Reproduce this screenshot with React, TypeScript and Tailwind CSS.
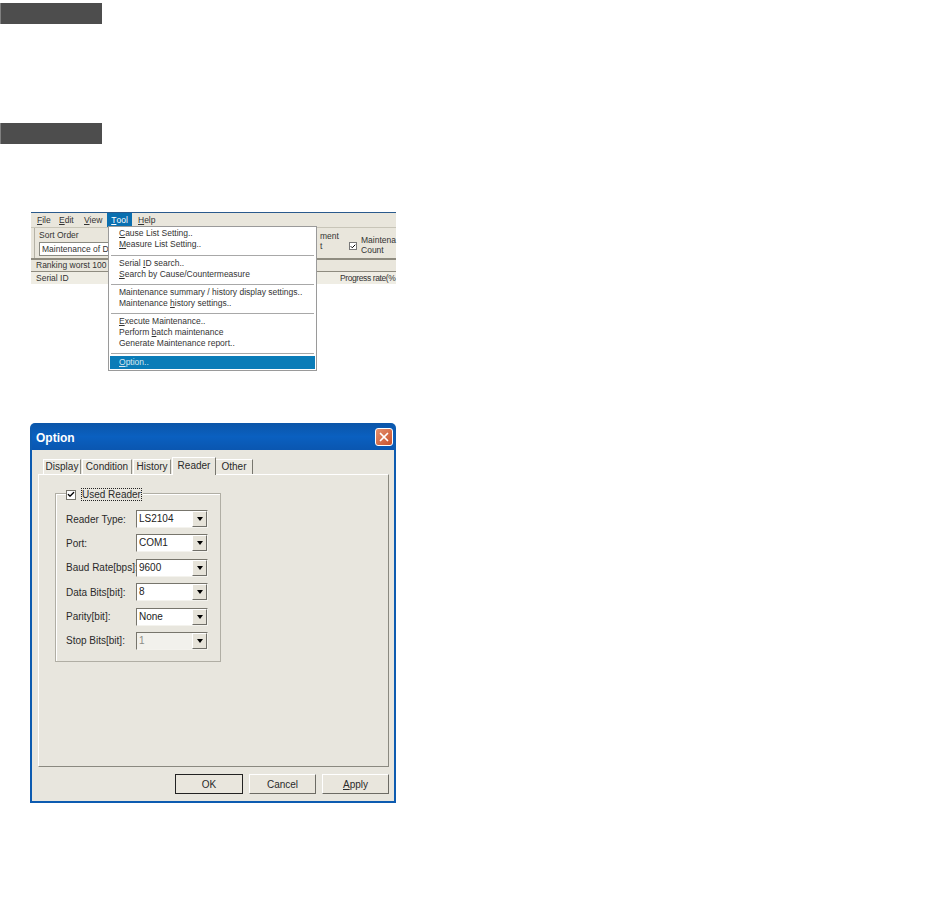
import type { ReactNode } from 'react';
import { Check, X } from 'lucide-react';

const menuGroups = [
  [
    { before: '', key: 'C', after: 'ause List Setting..' },
    { before: '', key: 'M', after: 'easure List Setting..' },
  ],
  [
    { before: 'Serial ', key: 'I', after: 'D search..' },
    { before: '', key: 'S', after: 'earch by Cause/Countermeasure' },
  ],
  [
    { before: 'Maintenance summary / history display settings..', key: '', after: '' },
    { before: 'Maintenance ', key: 'h', after: 'istory settings..' },
  ],
  [
    { before: '', key: 'E', after: 'xecute Maintenance..' },
    { before: 'Perform ', key: 'b', after: 'atch maintenance' },
    { before: 'Generate Maintenance report..', key: '', after: '' },
  ],
];

const tabs = [
  { label: 'Display', width: 'w-[38px]' },
  { label: 'Condition', width: 'w-[50px]' },
  { label: 'History', width: 'w-[38px]' },
];

const readerRows = [
  { label: 'Reader Type:', value: 'LS2104' },
  { label: 'Port:', value: 'COM1' },
  { label: 'Baud Rate[bps]:', value: '9600' },
  { label: 'Data Bits[bit]:', value: '8' },
  { label: 'Parity[bit]:', value: 'None' },
  { label: 'Stop Bits[bit]:', value: '1', disabled: true },
];

function SectionBar({ className }: { className: string }) {
  return <div className={`w-[102px] h-[21px] bg-[#4d4d4d] border-l border-[#808080] ${className}`}></div>;
}

function MenuScreenshot() {
  return (
    <div className="relative ml-[31px] w-[365px] h-[72px] mt-[68px] bg-[#e9e6dc] border-t border-[#2a5a8c] text-[8.5px] text-[#333]">
      {/* Menu bar */}
      <div className="flex h-[14px] items-center">
        <span className="ml-[6px] w-[22px]"><u>F</u>ile</span>
        <span className="w-[25px]"><u>E</u>dit</span>
        <span className="w-[23px]"><u>V</u>iew</span>
        <span className="w-[25px] h-full bg-[#0a6fb0] text-white flex items-center justify-center"><u>T</u>ool</span>
        <span className="ml-[6px]"><u>H</u>elp</span>
      </div>

      {/* Toolbar */}
      <div className="flex h-[31px] border-t border-[#c8c5b8] bg-[#e9e6dc]">
        <div className="w-[77px] ml-[3px] pl-[4px] pt-[1px] border-l border-[#b5b2a6]">
          <div className="h-[13px] leading-[13px]">Sort Order</div>
          <div className="w-[90px] h-[14px] leading-[13px] bg-white border border-[#8a8a82] pl-[2px] whitespace-nowrap">Maintenance of De</div>
        </div>
        <div className="ml-[209px] w-[33px] pt-[3px] leading-[10px] whitespace-nowrap">
          <div>ment</div>
          <div>t</div>
        </div>
        <div className="ml-[3px] w-[8px] h-[8px] mt-[14px] bg-white border border-[#777] flex items-center justify-center">
          <Check size={7} strokeWidth={4} className="text-black" />
        </div>
        <div className="ml-[4px] pt-[7px] leading-[10px] whitespace-nowrap">
          <div>Maintena</div>
          <div>Count</div>
        </div>
      </div>

      {/* Ranking and header rows */}
      <div className="h-[13px] border-t-2 border-[#8f8c80] pl-[5px] leading-[11px] bg-[#e9e6dc]">Ranking worst 100</div>
      <div className="flex h-[13px] border-t border-[#8f8c80] bg-[#efede4] leading-[12px]">
        <span className="pl-[5px]">Serial ID</span>
        <span className="ml-auto whitespace-nowrap w-[56px] tracking-[-0.4px]">Progress rate(%</span>
      </div>

      {/* Open Tool menu */}
      <div className="absolute left-[77px] top-[13px] w-[209px] h-[145px] bg-white border border-[#9a9a9a] pt-[1px] px-[1px]">
        {menuGroups.map((group, i) => (
          <div key={i}>
            {group.map((item, j) => (
              <div key={j} className="h-[11px] pl-[9px] leading-[11px] whitespace-nowrap">
                {item.before}
                {item.key && <u>{item.key}</u>}
                {item.after}
              </div>
            ))}
            <div className={`h-px bg-[#a8a8a8] mx-[1px] mb-[2px] ${i === 0 ? 'mt-[5px]' : 'mt-[4px]'}`}></div>
          </div>
        ))}
        <div className="h-[13px] mt-[1px] pl-[9px] leading-[13px] bg-[#0a7cb8] text-[#d8e8f0]">
          <u>O</u>ption..
        </div>
      </div>
    </div>
  );
}

function ReaderSelect({ value, disabled }: { value: string; disabled?: boolean }) {
  return (
    <div className="flex w-[72px] h-[18px] bg-white border-t border-l border-[#77756c] border-r border-b border-r-[#f4f3ee] border-b-[#f4f3ee]">
      <div className={`flex-1 pl-[2px] leading-[15px] ${disabled ? 'text-[#8c8c86] bg-[#f2f1ec]' : 'text-[#222]'}`}>{value}</div>
      <div className="w-[15px] bg-[#e6e3d9] border border-t-white border-l-white border-r-[#6f6e68] border-b-[#6f6e68] flex items-center justify-center">
        <div className="w-0 h-0 border-x-[3.5px] border-x-transparent border-t-[4px] border-t-black"></div>
      </div>
    </div>
  );
}

function DialogButton({ label, hasDefault, className }: { label: ReactNode; hasDefault?: boolean; className: string }) {
  return (
    <div className={`h-[20px] flex items-center justify-center bg-[#e9e6dd] border ${hasDefault ? 'border-[#222]' : 'border-t-white border-l-white border-r-[#6c6b64] border-b-[#6c6b64]'} ${className}`}>
      {label}
    </div>
  );
}

function OptionDialog() {
  return (
    <div className="ml-[30px] mt-[139px] w-[366px] h-[380px] flex flex-col bg-[#0d5bb0] rounded-t-[5px] p-[2px] pt-0">
      {/* Title bar */}
      <div className="h-[27px] shrink-0 flex items-center justify-between pl-[4px] pr-[1px] rounded-t-[5px] bg-gradient-to-b from-[#0b55a8] via-[#0a60c0] to-[#0a56b0]">
        <span className="text-white font-bold text-[12px] pt-[2px]">Option</span>
        <div className="w-[18px] h-[18px] rounded-[3px] border border-white bg-gradient-to-br from-[#e4906e] to-[#c8502a] flex items-center justify-center">
          <X size={14} strokeWidth={3} className="text-white" />
        </div>
      </div>

      {/* Client area */}
      <div className="flex-1 flex flex-col bg-[#e8e6de] pl-[6px] pr-[5px] text-[10px] text-[#2a2a2a]">
        {/* Tab strip */}
        <div className="flex items-end h-[24px] pl-[5px] shrink-0">
          {tabs.map((tab) => (
            <div key={tab.label} className={`${tab.width} h-[15px] mr-[1px] text-center leading-[13px] bg-[#ebe9e1] border-t border-l border-white border-r border-r-[#8f8e86]`}>
              {tab.label}
            </div>
          ))}
          <div className="w-[44px] h-[18px] text-center leading-[15px] bg-[#e8e6de] border-t border-l border-white border-r border-r-[#77766e] relative top-px">Reader</div>
          <div className="w-[37px] h-[15px] text-center leading-[13px] bg-[#ebe9e1] border-t border-white border-r border-r-[#77766e]">Other</div>
        </div>

        {/* Tab panel */}
        <div className="h-[293px] shrink-0 border-t border-l border-white border-r border-b border-r-[#8a8980] border-b-[#8a8980] pt-[18px] pl-[16px]">
          <div className="relative w-[166px] h-[169px] border border-[#b0aea4] shadow-[inset_1px_1px_0_#fff] pt-[16px] pl-[10px]">
            {/* Group title sits over the frame */}
            <div className="absolute left-[10px] -top-[6px] flex items-center bg-[#e8e6de] pr-[1px]">
              <div className="w-[10px] h-[10px] bg-white border border-[#77756c] flex items-center justify-center">
                <Check size={9} strokeWidth={4} className="text-black" />
              </div>
              <span className="ml-[5px] leading-[11px] border border-dotted border-[#222] whitespace-nowrap">Used Reader</span>
            </div>
            <div className="flex flex-col gap-[6.4px]">
              {readerRows.map((row) => (
                <div key={row.label} className="flex items-center h-[18px]">
                  <span className="w-[70px] whitespace-nowrap">{row.label}</span>
                  <ReaderSelect value={row.value} disabled={row.disabled} />
                </div>
              ))}
            </div>
          </div>
        </div>

        {/* Footer buttons */}
        <div className="flex mt-[7px] justify-end gap-[6px]">
          <DialogButton label="OK" hasDefault className="w-[68px]" />
          <DialogButton label="Cancel" className="w-[67px]" />
          <DialogButton label={<span><u>A</u>pply</span>} className="w-[67px]" />
        </div>
      </div>
    </div>
  );
}

export default function App() {
  return (
    <div className="w-[936px] h-[922px] overflow-hidden bg-white pt-[3px] font-['Liberation_Sans',sans-serif]">
      <SectionBar className="" />
      <SectionBar className="mt-[99px]" />
      <MenuScreenshot />
      <OptionDialog />
    </div>
  );
}
